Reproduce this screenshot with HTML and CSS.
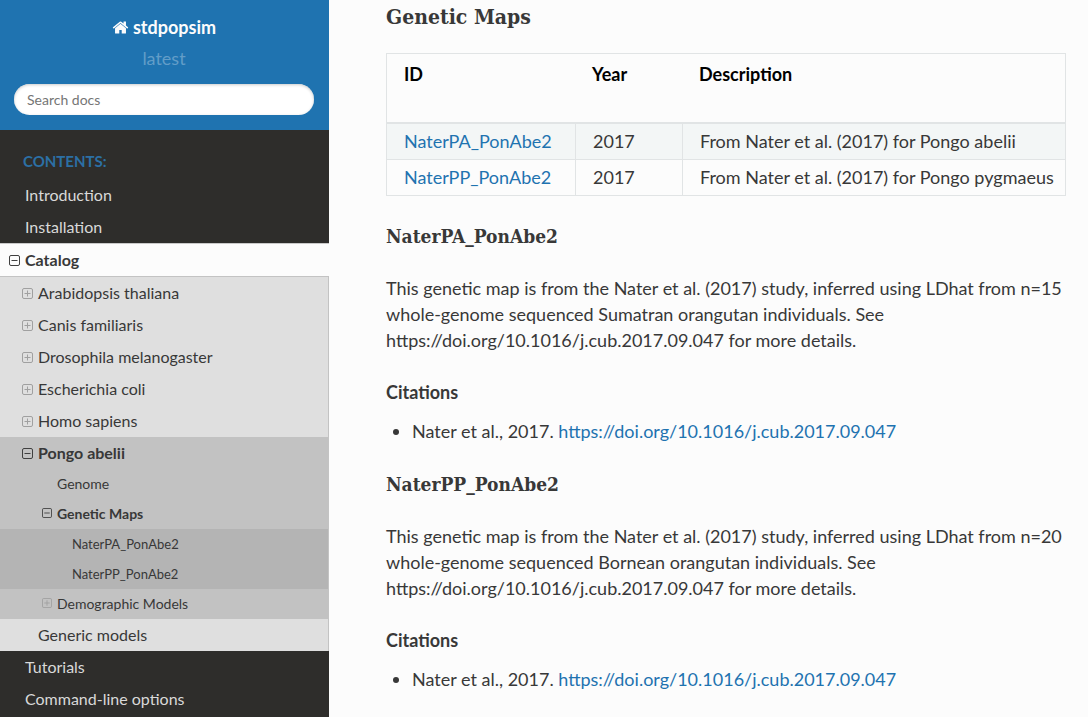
FILE: index.html
```html
<!DOCTYPE html>
<html lang="en">
<head>
<meta charset="utf-8">
<title>Genetic Maps — stdpopsim</title>
<link rel="stylesheet" href="styles.css">
</head>
<body>
<svg class="defs" aria-hidden="true">
  <symbol id="plus" viewBox="0 0 11 11"><rect x=".5" y=".5" width="10" height="10" rx="1.5"/><path d="M2.5 5.5h6M5.5 2.5v6"/></symbol>
  <symbol id="minus" viewBox="0 0 11 11"><rect x=".5" y=".5" width="10" height="10" rx="1.5"/><path d="M2.5 5.5h6"/></symbol>
</svg>
<div class="page">
  <aside class="sidebar">
    <header class="brand">
      <a class="brand-link" href="#"><svg class="home" viewBox="0 0 1792 1792" aria-hidden="true"><path d="M1472 992v480q0 26-19 45t-45 19h-384v-384h-256v384h-384q-26 0-45-19t-19-45v-480q0-1 .5-3t.5-3l575-474 575 474q1 2 1 6zm223-69l-62 74q-8 9-21 11h-3q-13 0-21-7l-692-577-692 577q-12 8-24 7-13-2-21-11l-62-74q-8-10-7-23.500t11-21.500l719-599q32-26 76-26t76 26l244 204v-195q0-14 9-23t23-9h192q14 0 23 9t9 23v408l219 182q10 8 11 21.500t-7 23.500z"/></svg>stdpopsim</a>
      <div class="version">latest</div>
      <input class="search" type="text" placeholder="Search docs" aria-label="Search docs">
    </header>
    <nav class="menu" aria-label="Contents">
      <p class="caption">CONTENTS:</p>
      <ul class="level1">
        <li><div class="row"><a href="#">Introduction</a></div></li>
        <li><div class="row"><a href="#">Installation</a></div></li>
        <li class="current">
          <div class="row open"><button class="toggle" aria-label="Collapse Catalog"><svg><use href="#minus"/></svg></button><a href="#">Catalog</a></div>
          <ul class="level2">
            <li><div class="row"><button class="toggle" aria-label="Expand Arabidopsis thaliana"><svg><use href="#plus"/></svg></button><a href="#">Arabidopsis thaliana</a></div></li>
            <li><div class="row"><button class="toggle" aria-label="Expand Canis familiaris"><svg><use href="#plus"/></svg></button><a href="#">Canis familiaris</a></div></li>
            <li><div class="row"><button class="toggle" aria-label="Expand Drosophila melanogaster"><svg><use href="#plus"/></svg></button><a href="#">Drosophila melanogaster</a></div></li>
            <li><div class="row"><button class="toggle" aria-label="Expand Escherichia coli"><svg><use href="#plus"/></svg></button><a href="#">Escherichia coli</a></div></li>
            <li><div class="row"><button class="toggle" aria-label="Expand Homo sapiens"><svg><use href="#plus"/></svg></button><a href="#">Homo sapiens</a></div></li>
            <li>
              <div class="row open"><button class="toggle" aria-label="Collapse Pongo abelii"><svg><use href="#minus"/></svg></button><a href="#">Pongo abelii</a></div>
              <ul class="level3">
                <li><div class="row"><a href="#">Genome</a></div></li>
                <li>
                  <div class="row open"><button class="toggle" aria-label="Collapse Genetic Maps"><svg><use href="#minus"/></svg></button><a href="#">Genetic Maps</a></div>
                  <ul class="level4">
                    <li><div class="row"><a href="#pa">NaterPA_PonAbe2</a></div></li>
                    <li><div class="row"><a href="#pp">NaterPP_PonAbe2</a></div></li>
                  </ul>
                </li>
                <li><div class="row"><button class="toggle" aria-label="Expand Demographic Models"><svg><use href="#plus"/></svg></button><a href="#">Demographic Models</a></div></li>
              </ul>
            </li>
            <li><div class="row"><a href="#">Generic models</a></div></li>
          </ul>
        </li>
        <li><div class="row"><a href="#">Tutorials</a></div></li>
        <li><div class="row"><a href="#">Command-line options</a></div></li>
      </ul>
    </nav>
  </aside>
  <main class="content">
    <h2>Genetic Maps</h2>
    <table class="maps">
      <colgroup><col class="col-id"><col class="col-year"><col></colgroup>
      <thead><tr><th scope="col">ID</th><th scope="col">Year</th><th scope="col">Description</th></tr></thead>
      <tbody>
        <tr><td><a href="#pa">NaterPA_PonAbe2</a></td><td>2017</td><td>From Nater et al. (2017) for Pongo abelii</td></tr>
        <tr><td><a href="#pp">NaterPP_PonAbe2</a></td><td>2017</td><td>From Nater et al. (2017) for Pongo pygmaeus</td></tr>
      </tbody>
    </table>
    <section id="pa">
      <h3>NaterPA_PonAbe2</h3>
      <p>This genetic map is from the Nater et al. (2017) study, inferred using LDhat from n=15 whole-genome sequenced Sumatran orangutan individuals. See https://doi.org/10.1016/j.cub.2017.09.047 for more details.</p>
      <h4>Citations</h4>
      <ul class="cites"><li>Nater et al., 2017. <a href="#">https://doi.org/10.1016/j.cub.2017.09.047</a></li></ul>
    </section>
    <section id="pp">
      <h3>NaterPP_PonAbe2</h3>
      <p>This genetic map is from the Nater et al. (2017) study, inferred using LDhat from n=20 whole-genome sequenced Bornean orangutan individuals. See https://doi.org/10.1016/j.cub.2017.09.047 for more details.</p>
      <h4>Citations</h4>
      <ul class="cites"><li>Nater et al., 2017. <a href="#">https://doi.org/10.1016/j.cub.2017.09.047</a></li></ul>
    </section>
  </main>
</div>
</body>
</html>
```

FILE: styles.css
```css
* { box-sizing: border-box; }
body {
  margin: 0;
  background: #fcfcfc;
  color: #383838;
  font: 18px/26px Lato, "Liberation Sans", sans-serif;
}
ul { list-style: none; margin: 0; padding: 0; }
a { color: #1f73b0; text-decoration: none; }
.defs { position: absolute; width: 0; height: 0; }
.page { display: flex; min-height: 100vh; }

.sidebar { flex: none; width: 329px; background: #2e2d2b; }
.brand {
  display: flex;
  flex-direction: column;
  align-items: center;
  height: 130px;
  padding: 14px 15px 0 14px;
  background: #1f73b0;
}
.brand-link { display: flex; align-items: center; gap: 4px; color: #fcfcfc; font-weight: 700; }
.home { width: 17px; height: 17px; fill: currentColor; }
.version { margin-top: 5px; color: #629dc8; }
.search {
  width: 100%;
  height: 31px;
  margin-top: 13px;
  padding: 0 13px;
  border: 0;
  border-radius: 16px;
  background: #fff;
  box-shadow: inset 0 1px 3px #ccc;
  font: 14px Lato, "Liberation Sans", sans-serif;
}
.search::placeholder { color: #757575; }

.menu { font-size: 16px; line-height: 32px; }
.caption { margin: 0; padding: 15px 23px 2px; color: #2c70a5; font-size: 15px; font-weight: 700; }
.row { display: flex; align-items: center; height: 32px; padding-left: 25px; }
.row a { color: #d9d9d9; }
.current a { color: #383838; }
.toggle {
  display: flex;
  width: 16px;
  margin-left: -16px;
  padding: 0;
  border: 0;
  background: none;
  color: #a0a0a0;
}
.toggle svg { width: 11px; height: 11px; fill: none; stroke: currentColor; }
.open .toggle { color: #404040; }
.open a { font-weight: 700; }
.current > .row { height: 33px; background: #fcfcfc; border-top: 1px solid #c9c9c9; }
.level2 { background: #dfdfdf; border: solid #c3c3c3; border-width: 1px 1px 0 0; }
.level2 .row { padding-left: 38px; }
.level2 > li > .open, .level3 { background: #c2c2c2; }
.level3 { font-size: 14px; line-height: 30px; }
.level3 .row { height: 30px; padding-left: 57px; }
.level3 .toggle { width: 15px; margin-left: -15px; padding-bottom: 2px; }
.level3 .toggle svg { width: 10px; height: 10px; }
.level4 { background: #b4b4b4; font-size: 13px; }
.level4 .row { padding-left: 72px; }

.content { flex: 1; min-width: 0; padding: 4px 22px 0 57px; }
h2, h3 { margin: 0; font-family: "Roboto Slab", "DejaVu Serif Condensed", "DejaVu Serif", serif; font-weight: 700; }
h2 { font-size: 21px; }
h3 { font-size: 19px; }
.maps {
  width: 100%;
  margin: 23px 0 27px;
  border: 1px solid #e1e4e5;
  border-spacing: 0;
  table-layout: fixed;
}
.col-id { width: 188px; }
.col-year { width: 107px; }
.maps th { padding: 7px 8px 35px 17px; border-bottom: 2px solid #e1e4e5; color: #000; text-align: left; }
.maps td { padding: 4px 8px 5px 17px; border-left: 1px solid #e1e4e5; border-bottom: 1px solid #e1e4e5; }
.maps td:first-child { border-left: 0; }
.maps tr:last-child td { border-bottom: 0; }
.maps tbody tr:first-child { background: #f3f6f6; }
.content p { margin: 26px 0; }
h4 { margin: 0; font-size: 18px; font-weight: 700; }
.cites { margin: 13px 0 27px; padding-left: 26px; list-style: disc; }
```
